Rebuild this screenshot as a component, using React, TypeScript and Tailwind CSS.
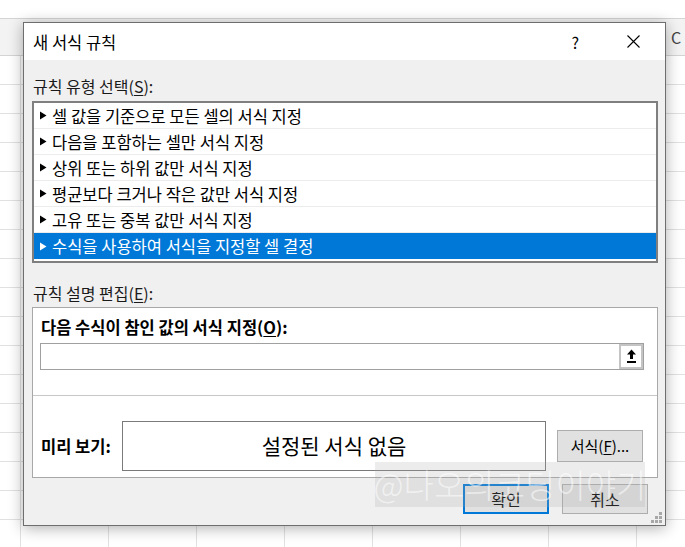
import React from "react";

const items = [
  "셀 값을 기준으로 모든 셀의 서식 지정",
  "다음을 포함하는 셀만 서식 지정",
  "상위 또는 하위 값만 서식 지정",
  "평균보다 크거나 작은 값만 서식 지정",
  "고유 또는 중복 값만 서식 지정",
  "수식을 사용하여 서식을 지정할 셀 결정",
];

function Tri({ white }: { white?: boolean }) {
  return (
    <svg width="7" height="9" viewBox="0 0 7 9" className="shrink-0">
      <path d="M0 0.5 L6.5 4.5 L0 8.5 Z" fill={white ? "#ffffff" : "#000000"} />
    </svg>
  );
}

function SheetRow() {
  return (
    <div className="flex h-[29px] shrink-0 border-b border-[#e1e1e1]">
      <div className="w-[21px] shrink-0 border-r border-[#e1e1e1]" />
      {Array.from({ length: 8 }).map((_, i) => (
        <div key={i} className="w-[88px] shrink-0 border-r border-[#e1e1e1]" />
      ))}
    </div>
  );
}

export default function App() {
  return (
    <div className="relative w-[685px] h-[547px] overflow-hidden bg-white font-['Noto_Sans_CJK_KR','Noto_Sans',sans-serif] text-black">
      {/* spreadsheet background */}
      <div className="flex flex-col">
        <div className="h-[19px] shrink-0 border-b border-[#d4d4d4]" />
        <div className="h-[37px] shrink-0 bg-[#f3f3f3] border-b border-[#d4d4d4] flex items-center pl-[671px] text-[16px] text-[#444]">
          C
        </div>
        {Array.from({ length: 17 }).map((_, i) => (
          <SheetRow key={i} />
        ))}
      </div>

      {/* dialog */}
      <div className="absolute left-[23px] top-[22px] w-[643px] h-[504px] border border-[#6e6e6e] bg-[#f0f0f0] shadow-[0_2px_14px_rgba(0,0,0,0.32)] flex flex-col">
        {/* title bar */}
        <div className="h-[37px] shrink-0 bg-white flex items-center pl-[9px] text-[16.5px] leading-[18px]">
          <span>새 서식 규칙</span>
          <span className="ml-auto mr-[48px] text-[16px]">?</span>
          <svg width="13" height="13" viewBox="0 0 13 13" className="mr-[25px]">
            <path d="M0.5 0.5 L12.5 12.5 M12.5 0.5 L0.5 12.5" stroke="#000" strokeWidth="1.1" />
          </svg>
        </div>

        {/* body */}
        <div className="flex flex-col pl-[8px] pr-[7px] text-[16px]">
          <div className="h-[41px] pt-[17px] pl-[1px] leading-[18px] text-[#1a1a1a] whitespace-nowrap">
            규칙 유형 선택(<span className="underline underline-offset-2">S</span>):
          </div>

          <div className="h-[162px] border-2 border-[#7f7f7f] bg-white flex flex-col text-[16.5px]">
            {items.map((t, i) => {
              const sel = i === items.length - 1;
              return (
                <div
                  key={i}
                  className={
                    sel
                      ? "h-[26px] shrink-0 flex items-center gap-[5px] pl-[6px] bg-[#0078d7] text-white"
                      : "h-[26px] shrink-0 flex items-center gap-[5px] pl-[6px] border-b border-[#ececec]"
                  }
                >
                  <Tri white={sel} />
                  <span className="leading-[18px] whitespace-nowrap">{t}</span>
                </div>
              );
            })}
          </div>

          <div className="h-[44px] pt-[21px] pl-[1px] leading-[18px] text-[#1a1a1a] whitespace-nowrap">
            규칙 설명 편집(<span className="underline underline-offset-2">E</span>):
          </div>

          {/* description panel */}
          <div className="h-[171px] border border-[#a8a8a8] bg-white flex flex-col">
            <div className="pt-[10px] pl-[8px] leading-[18px] font-bold text-[16.5px] whitespace-nowrap">
              다음 수식이 참인 값의 서식 지정(<span className="underline underline-offset-2">O</span>):
            </div>
            <div className="mt-[7px] ml-[7px] mr-[13px] h-[27px] flex border border-[#a0a0a0]">
              <div className="flex-1" />
              <div className="w-[24px] h-full border-2 border-[#c4c4c4] bg-white flex items-center justify-center">
                <svg width="11" height="15" viewBox="0 0 11 15">
                  <path d="M5.5 0.5 L10 5.5 L7 5.5 L7 10 L4 10 L4 5.5 L1 5.5 Z" fill="#000" />
                  <rect x="1" y="12" width="9" height="2" fill="#000" />
                </svg>
              </div>
            </div>
            <div className="mt-[25px] h-[1px] bg-[#c8c8c8]" />
            <div className="flex items-center mt-[25px] pl-[8px]">
              <span className="font-bold leading-[18px] w-[81px] shrink-0 text-[16.5px] whitespace-nowrap">미리 보기:</span>
              <div className="w-[424px] h-[50px] border border-[#7a7a7a] flex items-center justify-center text-[21px] whitespace-nowrap">
                설정된 서식 없음
              </div>
              <div className="ml-[11px] w-[86px] h-[32px] border border-[#adadad] bg-[#e1e1e1] flex items-center justify-center text-[15px] whitespace-nowrap">
                서식(<span className="underline underline-offset-2">F</span>)...
              </div>
            </div>
          </div>

          {/* bottom buttons */}
          <div className="flex justify-end mt-[6px] pr-[10px] text-[16px]">
            <div className="w-[86px] h-[30px] border-2 border-[#0078d7] bg-[#e1e1e1] flex items-center justify-center">
              확인
            </div>
            <div className="ml-[13px] w-[86px] h-[30px] border border-[#adadad] bg-[#e1e1e1] flex items-center justify-center">
              취소
            </div>
          </div>
        </div>

        {/* resize grip */}
        <svg width="11" height="11" viewBox="0 0 11 11" className="absolute right-[3px] bottom-[2px]">
          <rect x="8" y="0" width="3" height="3" fill="#a8a8a8" />
          <rect x="4" y="4" width="3" height="3" fill="#a8a8a8" />
          <rect x="8" y="4" width="3" height="3" fill="#a8a8a8" />
          <rect x="0" y="8" width="3" height="3" fill="#a8a8a8" />
          <rect x="4" y="8" width="3" height="3" fill="#a8a8a8" />
          <rect x="8" y="8" width="3" height="3" fill="#a8a8a8" />
        </svg>
      </div>

      {/* watermark */}
      <div className="absolute left-[375px] top-[462px] w-[270px] h-[45px] bg-[rgba(170,170,170,0.22)] flex items-center justify-center text-[33px] leading-none text-[rgba(255,255,255,0.55)] whitespace-nowrap font-['Noto_Sans_CJK_KR',sans-serif] font-light">
        @나오의코딩이야기
      </div>
    </div>
  );
}
